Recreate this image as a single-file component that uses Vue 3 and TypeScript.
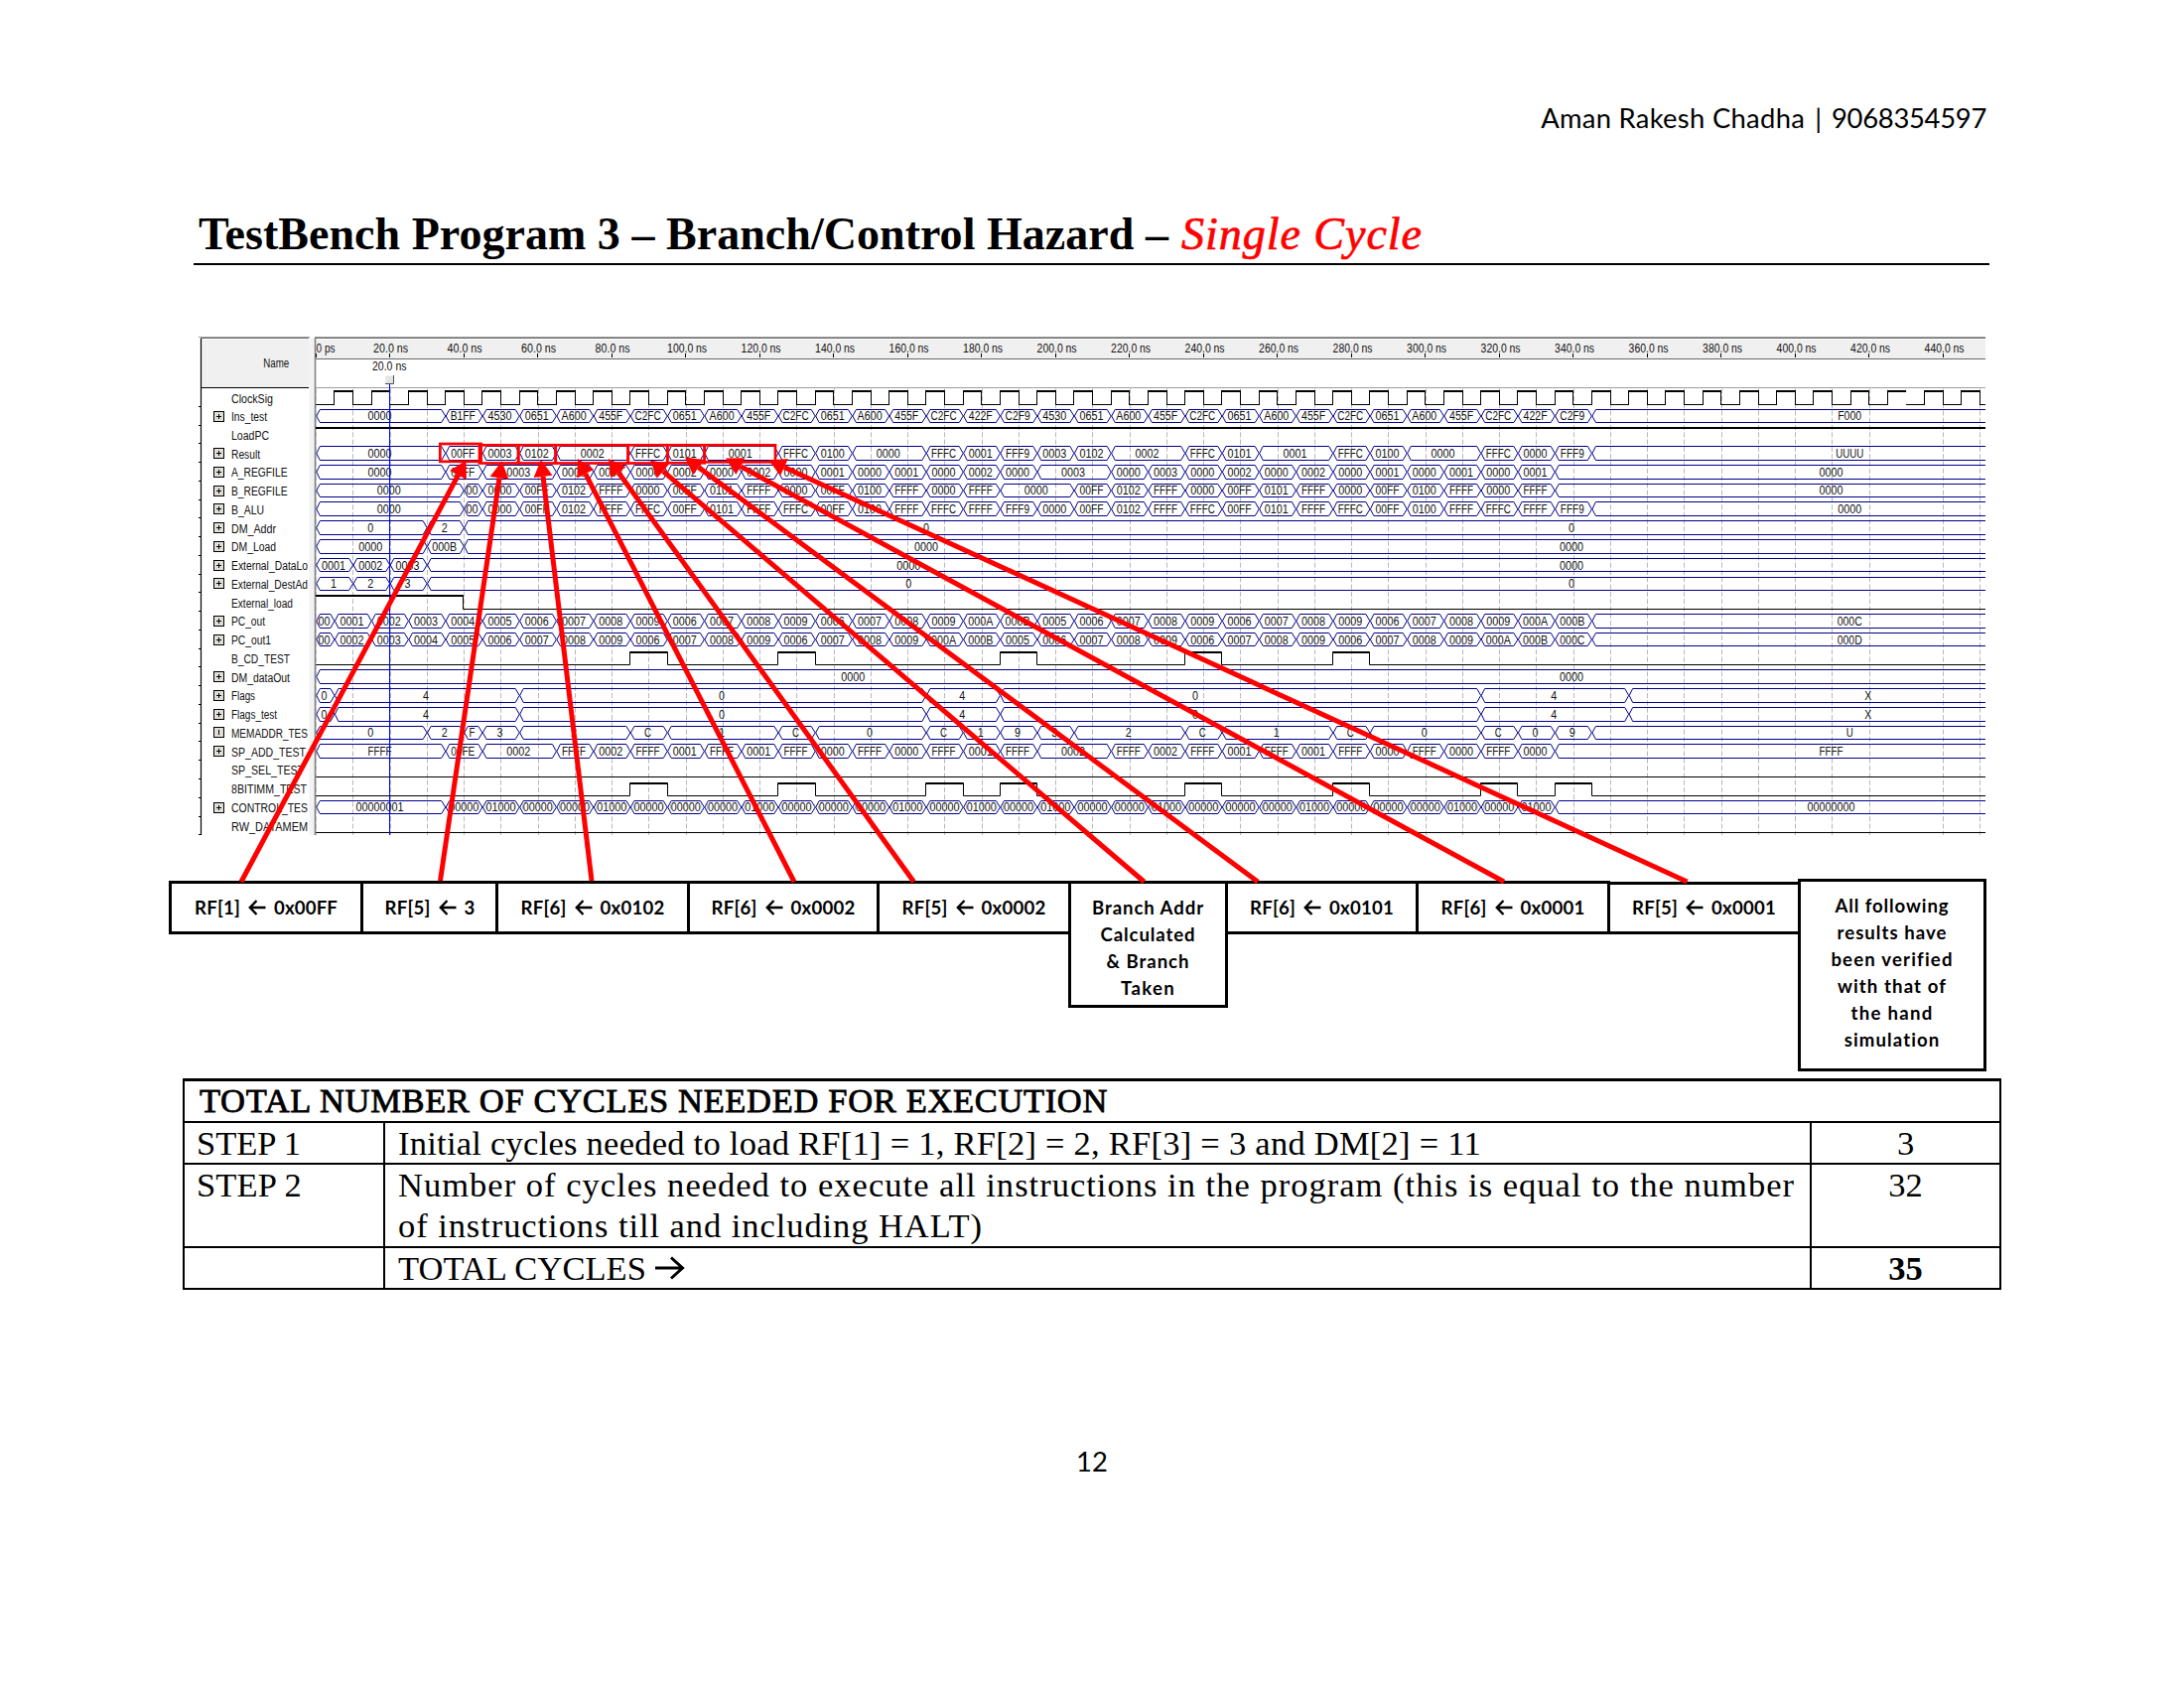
<script setup lang="ts">
import type { Directive } from 'vue'

// Tracks a line of text in or out so that it sets to the given measure.
const vFit: Directive<HTMLElement, number> = {
  mounted(el, { value }) {
    const natural = el.getBoundingClientRect().width
    const count = (el.textContent ?? '').trim().length
    if (count > 0) el.style.letterSpacing = `${(value - natural) / count}px`
  },
}

interface Cell { from: number; to: number; text: string; at: number[] }
interface Signal {
  name: string
  width: number
  y: number
  bus: boolean
  cells: Cell[]
  path: string
  clipped: boolean
}

const X0 = 318.3
const SCALE = 3.725
const END = 2000
const LAST = 485
const snap = (v: number): number => Math.floor(v) + 0.5
const px = (t: number): number => Math.round((X0 + t * SCALE) * 10) / 10
const rowY = (i: number): number => 419 + 18.76 * (i - 1)

// Values are "start:text"; optional "@t1,t2" gives label times.
function parse(spec: string): Cell[] {
  const items = spec.trim().split(/\s+/).map((s) => {
    const [body, at] = s.split('@')
    const [start, text] = body.split(':')
    return { from: Number(start), text, at: at ? at.split(',').map(Number) : [] }
  })
  return items.map((c, i) => {
    const to = i + 1 < items.length ? items[i + 1].from : LAST
    return { ...c, to, at: c.at.length ? c.at : [(c.from + to) / 2] }
  })
}

// Consecutive values, 10 ns apart, following an initial prefix.
function run(prefix: string, start: number, values: string): string {
  const out: string[] = []
  values.trim().split(/\s+/).forEach((v, i) => {
    if (v !== '-') out.push(`${start + i * 10}:${v}`)
  })
  return `${prefix} ${out.join(' ')}`
}

const charWidth = (c: string): number => ('ABCDUX'.includes(c) ? 7 : 6)
const textWidth = (s: string): number => [...s].reduce((w, c) => w + charWidth(c), 0)

function busPath(cells: Cell[], y: number): string {
  return cells.map((c) => {
    const a = px(c.from)
    const b = px(c.to)
    const t = snap(y - 6.8)
    const m = snap(y + 6.8)
    if (b > END) return `M${END} ${t}H${a + 4}L${a + 0.5} ${y}L${a + 4} ${m}H${END}`
    return `M${a + 4} ${t}H${b - 4}L${b} ${y}L${b - 4} ${m}H${a + 4}L${a + 0.5} ${y}Z`
  }).join('')
}

function levelPath(highs: number[][], y: number): string {
  const lo = snap(y + 6.8)
  const hi = snap(y - 6.2)
  let d = `M${X0} ${lo}`
  for (const [a, b] of highs) {
    d += `H${snap(px(a))}V${hi}H${snap(px(b))}V${lo}`
    d += `M${snap(px(a))} ${hi + 1}H${snap(px(b))}M${snap(px(b))} ${lo}`
  }
  return `${d}H${END}`
}

const raw: { name: string; width: number; spec?: string; highs?: number[][]; clipped?: boolean }[] = [
  { name: 'ClockSig', width: 42 },
  { name: 'Ins_test', width: 36, spec: run('0:0000', 35, 'B1FF 4530 0651 A600 455F C2FC 0651 A600 455F C2FC 0651 A600 455F C2FC 422F C2F9 4530 0651 A600 455F C2FC 0651 A600 455F C2FC 0651 A600 455F C2FC 422F C2F9 F000') },
  { name: 'LoadPC', width: 38 },
  { name: 'Result', width: 29, spec: run('0:0000', 35, '00FF 0003 0102 0002 - FFFC 0101 0001 - FFFC 0100 0000 - FFFC 0001 FFF9 0003 0102 0002 - FFFC 0101 0001 - FFFC 0100 0000 - FFFC 0000 FFF9 UUUU') },
  { name: 'A_REGFILE', width: 56.5, spec: run('0:0000', 35, '00FF 0003 - 0000 0003 0000 0002 0000 0002 0000 0001 0000 0001 0000 0002 0000 0003 - 0000 0003 0000 0002 0000 0002 0000 0001 0000 0001 0000 0001 0000') },
  { name: 'B_REGFILE', width: 56.5, spec: run('0:0000 40:00', 45, '0000 00FF 0102 FFFF 0000 00FF 0101 FFFF 0000 00FF 0100 FFFF 0000 FFFF 0000 - 00FF 0102 FFFF 0000 00FF 0101 FFFF 0000 00FF 0100 FFFF 0000 FFFF 0000') },
  { name: 'B_ALU', width: 33, spec: run('0:0000 40:00', 45, '0000 00FF 0102 FFFF FFFC 00FF 0101 FFFF FFFC 00FF 0100 FFFF FFFC FFFF FFF9 0000 00FF 0102 FFFF FFFC 00FF 0101 FFFF FFFC 00FF 0100 FFFF FFFC FFFF FFF9 0000') },
  { name: 'DM_Addr', width: 45, spec: '0:0 30:2 40:0@165.3,339.8' },
  { name: 'DM_Load', width: 45, spec: '0:0000 30:000B 40:0000@165.3,339.8' },
  { name: 'External_DataLo', width: 77, spec: '0:0001 10:0002 20:0003 30:0000@160.5,339.8' },
  { name: 'External_DestAd', width: 77, spec: '0:1 10:2 20:3 30:0@160.5,339.8' },
  { name: 'External_load', width: 62 },
  { name: 'PC_out', width: 34, spec: run('0:00', 5, '0001 0002 0003 0004 0005 0006 0007 0008 0009 0006 0007 0008 0009 0006 0007 0008 0009 000A 000B 0005 0006 0007 0008 0009 0006 0007 0008 0009 0006 0007 0008 0009 000A 000B 000C') },
  { name: 'PC_out1', width: 40, spec: run('0:00', 5, '0002 0003 0004 0005 0006 0007 0008 0009 0006 0007 0008 0009 0006 0007 0008 0009 000A 000B 0005 0006 0007 0008 0009 0006 0007 0008 0009 0006 0007 0008 0009 000A 000B 000C 000D') },
  { name: 'B_CD_TEST', width: 59, highs: [[85, 95], [125, 135], [185, 195], [235, 245], [275, 285]] },
  { name: 'DM_dataOut', width: 59, spec: '0:0000@145.5,339.8' },
  { name: 'Flags', width: 24, spec: '0:0 5:4 55:0 165:4 185:0@238 315:4 355:X' },
  { name: 'Flags_test', width: 46, spec: '0:0 5:4 55:0 165:4 185:0@238 315:4 355:X' },
  { name: 'MEMADDR_TES', width: 77, spec: '0:0 30:2 40:F 45:3 55:2 85:C 95:1 125:C 135:0 165:C 175:1 185:9 195:3 205:2 235:C 245:1 275:C 285:0 315:C 325:0 335:9 345:U' },
  { name: 'SP_ADD_TEST', width: 75, spec: run('0:FFFF', 35, '00FE 0002 - FFFF 0002 FFFF 0001 FFFF 0001 FFFF 0000 FFFF 0000 FFFF 0001 FFFF 0002 - FFFF 0002 FFFF 0001 FFFF 0001 FFFF 0000 FFFF 0000 FFFF 0000 FFFF') },
  { name: 'SP_SEL_TEST', width: 73, highs: [] },
  { name: '8BITIMM_TEST', width: 76, highs: [[85, 95], [125, 135], [165, 175], [185, 195], [235, 245], [275, 285], [315, 325], [335, 345]] },
  { name: 'CONTROL_TES', width: 77, clipped: true, spec: run('0:00000001', 35, '0000000 0010000 0000000 0000000 0010000 0000000 0000000 0000000 0010000 0000000 0000000 0000000 0010000 0000000 0010000 0000000 0010000 0000000 0000000 0010000 0000000 0000000 0000000 0010000 0000000 0000000 0000000 0010000 0000000 0010000 00000000') },
  { name: 'RW_DATAMEM', width: 77, highs: [] },
]

const signals: Signal[] = raw.map((r, i) => {
  const y = Math.round(rowY(i) * 10) / 10
  const cells = r.spec ? parse(r.spec) : []
  return {
    name: r.name,
    width: r.width,
    y,
    bus: cells.length > 0,
    cells,
    clipped: !!r.clipped,
    path: cells.length ? busPath(cells, y) : r.highs ? levelPath(r.highs, y) : '',
  }
})

const clockLow: string[] = []
const clockHigh: string[] = []
const clockEdge: string[] = []
for (let t = 0; t <= 450; t += 10) {
  clockLow.push(`M${px(t)} 407.5H${Math.min(px(t + 5), END)}`)
  if (t + 5 < 451) {
    clockHigh.push(`M${px(t + 5)} 394H${Math.min(px(t + 10), END)}`)
    clockEdge.push(`M${snap(px(t + 5))} 393V408`)
    if (t + 10 !== 430 && t < 450) clockEdge.push(`M${snap(px(t + 10))} 393V408`)
  }
}

const gridTimes = Array.from({ length: 46 }, (_, i) => i * 10).filter((t) => t !== 430)
const ticks = Array.from({ length: 23 }, (_, i) => {
  const t = i * 20
  return {
    x: snap(px(t)),
    label: t === 0 ? '0 ps' : `${t}.0 ns`,
    width: t === 0 ? 19 : t < 100 ? 35 : 40,
    start: t === 0 ? 318.5 : px(t) - (t < 100 ? 16.7 : 18.7),
  }
})

const marks = [
  { x: 443.3, y: 447, w: 41.3, h: 17.8 },
  { x: 483, y: 448.3, w: 39, h: 18.2 },
  { x: 522.3, y: 448.3, w: 37.4, h: 18.2 },
  { x: 559.7, y: 448.3, w: 73, h: 18.2 },
  { x: 632.7, y: 448.3, w: 39.6, h: 18.2 },
  { x: 672.3, y: 448.3, w: 37.4, h: 18 },
  { x: 709.7, y: 448.3, w: 71.3, h: 17 },
]

const arrows = [
  [243, 888, 469.5, 463.5],
  [443.5, 887, 505.5, 464.5],
  [596, 887, 545, 463],
  [800, 888, 582, 462],
  [920.5, 888, 613, 462],
  [1152.5, 888, 655, 463.5],
  [1267, 888, 690, 460.5],
  [1515, 888, 731, 461.5],
  [1699.5, 888, 774.5, 463.5],
].map(([x1, y1, x2, y2]) => {
  const len = Math.hypot(x2 - x1, y2 - y1)
  const ux = (x2 - x1) / len
  const uy = (y2 - y1) / len
  const bx = x2 - ux * 17
  const by = y2 - uy * 17
  return {
    x1, y1, x2: bx, y2: by,
    head: `${x2},${y2} ${bx - uy * 9.5},${by + ux * 9.5} ${bx + uy * 9.5},${by - ux * 9.5}`,
  }
})

interface Callout { kind: string; width: number; reg?: string; value?: string; valueWidth?: number; lines?: { text: string; width: number }[] }
const callouts: Callout[] = [
  { kind: 'reg', width: 196, reg: 'RF[1]', value: '0x00FF', valueWidth: 64 },
  { kind: 'reg', width: 139, reg: 'RF[5]', value: '3', valueWidth: 10 },
  { kind: 'reg', width: 196, reg: 'RF[6]', value: '0x0102', valueWidth: 65 },
  { kind: 'reg', width: 194, reg: 'RF[6]', value: '0x0002', valueWidth: 65 },
  { kind: 'reg', width: 196, reg: 'RF[5]', value: '0x0002', valueWidth: 65 },
  { kind: 'branch', width: 161, lines: [
    { text: 'Branch Addr', width: 113 }, { text: 'Calculated', width: 96 },
    { text: '& Branch', width: 84 }, { text: 'Taken', width: 55 },
  ] },
  { kind: 'reg', width: 195, reg: 'RF[6]', value: '0x0101', valueWidth: 65 },
  { kind: 'reg', width: 196, reg: 'RF[6]', value: '0x0001', valueWidth: 65 },
  { kind: 'reg', width: 195, reg: 'RF[5]', value: '0x0001', valueWidth: 65 },
  { kind: 'note', width: 190, lines: [
    { text: 'All following', width: 115 }, { text: 'results have', width: 111 },
    { text: 'been verified', width: 123 }, { text: 'with that of', width: 110 },
    { text: 'the hand', width: 83 }, { text: 'simulation', width: 97 },
  ] },
]
</script>

<template>
  <main class="page">
    <header class="running-head">
      <span v-fit="266" class="line">Aman Rakesh Chadha</span>
      <span class="line">|</span>
      <span v-fit="156" class="line">9068354597</span>
    </header>
    <h1 class="title">
      <span v-fit="977" class="line">TestBench Program 3 – Branch/Control Hazard –</span>
      <em v-fit="243" class="line accent">Single Cycle</em>
    </h1>

    <svg class="wave" viewBox="160 330 1850 555" width="1850" height="555">
      <rect x="203" y="342" width="108.500" height="48" fill="#f0f0f0" />
      <rect x="311.500" y="340" width="5" height="501" fill="#f3f3f3" />
      <rect x="318" y="342" width="1682" height="19" fill="#f0f0f0" />
      <path d="M200 339.500H312M317 339.500H2000" stroke="#a0a0a0" />
      <path d="M202 340.500H311M317 340.500H2000" stroke="#696969" />
      <path d="M317.500 341V841" stroke="#808080" stroke-width="1.600" />
      <path d="M318 361.500H2000" stroke="#696969" />
      <path d="M318 390.500H2000" stroke="#a0a0a0" />
      <path d="M202 390.500H311" stroke="#000" />
      <path d="M202.500 341V841" stroke="#000" stroke-width="1.200" />
      <path v-for="(s, i) in signals" :key="'d' + i" :d="`M200 ${snap(s.y + 9)}H202`" stroke="#000" />
      <text class="wt" x="265.300" y="370" textLength="26" lengthAdjust="spacingAndGlyphs">Name</text>

      <g v-for="(s, i) in signals" :key="s.name">
        <template v-if="s.bus">
          <rect x="215.500" :y="snap(s.y) - 5" width="10" height="10" fill="#e0ded8" stroke="#000" />
          <path v-if="s.name !== 'MEMADDR_TES'" :d="`M218 ${snap(s.y)}H223`" stroke="#000" />
          <path :d="`M220.500 ${snap(s.y) - 2.5}V${snap(s.y) + 2.5}`" stroke="#000" />
        </template>
        <text class="wt" x="233" :y="s.y + (i ? 5 : 5.8)" :textLength="s.width" lengthAdjust="spacingAndGlyphs">{{ s.name }}</text>
      </g>

      <g v-for="t in ticks" :key="t.label">
        <path :d="`M${t.x} 356V360`" stroke="#000" />
        <text class="wt" :x="t.start" y="355.200" :textLength="t.width" lengthAdjust="spacingAndGlyphs">{{ t.label }}</text>
      </g>
      <text class="wt" x="375" y="373.200" textLength="34.500" lengthAdjust="spacingAndGlyphs">20.0 ns</text>

      <path v-for="t in gridTimes" :key="'g' + t" :d="`M${snap(px(t) + 0.2)} 391.500V841`" stroke="#b8b8b8" stroke-dasharray="5 2.300" />

      <path :d="clockLow.join('')" stroke="#000" />
      <path :d="clockHigh.join('')" stroke="#000" stroke-width="2" />
      <path :d="clockEdge.join('')" stroke="#000" />
      <path d="M318 431H2000" stroke="#000" stroke-width="2" />
      <path d="M318 600H466.800" stroke="#000" stroke-width="2" />
      <path d="M466.500 599.500V613.500H2000" stroke="#000" fill="none" />

      <g v-for="s in signals" :key="'w' + s.name">
        <path v-if="s.path" :d="s.path" :stroke="s.bus ? '#00008b' : '#000'" fill="none" />
        <template v-for="c in s.cells" :key="c.from">
          <svg v-if="s.clipped && c.text.length === 7" :x="px(c.from) + 3" :y="s.y - 7" width="31" height="14">
            <text class="wt" x="-5.500" y="11.400" textLength="42" lengthAdjust="spacingAndGlyphs">{{ c.text }}</text>
          </svg>
          <template v-else>
            <text
              v-for="at in c.at" :key="at" class="wt" :x="px(at) - 1 - textWidth(c.text) / 2" :y="s.y + 4.4"
              :textLength="textWidth(c.text)" lengthAdjust="spacingAndGlyphs"
            >{{ c.text }}</text>
          </template>
        </template>
      </g>

      <path d="M392.500 387V841" stroke="#0000ff" />
      <rect x="388.500" y="378.500" width="8" height="8" fill="#e4e4e4" />
      <path d="M388 386.500H396.500V378" stroke="#505050" fill="none" />

      <rect v-for="(m, i) in marks" :key="'m' + i" :x="m.x" :y="m.y" :width="m.w" :height="m.h" fill="none" stroke="#f00" stroke-width="2.700" />
      <g v-for="(a, i) in arrows" :key="'a' + i">
        <line :x1="a.x1" :y1="a.y1" :x2="a.x2" :y2="a.y2" stroke="#f00" stroke-width="5" />
        <polygon :points="a.head" fill="#f00" />
      </g>
    </svg>

    <section class="callouts">
      <div v-for="(c, i) in callouts" :key="i" class="callout" :class="[c.kind, { lower: i === 8 }]" :style="{ width: c.width + 'px' }">
        <template v-if="c.kind === 'reg'">
          <span v-fit="46" class="line">{{ c.reg }}</span>
          <svg class="larr" viewBox="0 0 18 16" width="18" height="16"><path d="M17.500 8H2M8.500 1L1.800 8L8.500 15" /></svg>
          <span v-fit="c.valueWidth!" class="line">{{ c.value }}</span>
        </template>
        <template v-else>
          <span v-for="l in c.lines" :key="l.text" v-fit="l.width" class="line">{{ l.text }}</span>
        </template>
      </div>
    </section>

    <table class="cycles">
      <colgroup><col class="c-step"><col class="c-text"><col class="c-num"></colgroup>
      <tbody>
        <tr class="r0"><th colspan="3"><span v-fit="915" class="line">TOTAL NUMBER OF CYCLES NEEDED FOR EXECUTION</span></th></tr>
        <tr class="r1">
          <td><span v-fit="105" class="line">STEP 1</span></td>
          <td><span v-fit="1091" class="line">Initial cycles needed to load RF[1] = 1, RF[2] = 2, RF[3] = 3 and DM[2] = 11</span></td>
          <td class="num">3</td>
        </tr>
        <tr class="r2">
          <td><span v-fit="106" class="line">STEP 2</span></td>
          <td>
            <span v-fit="1407" class="line">Number of cycles needed to execute all instructions in the program (this is equal to the number</span><br>
            <span v-fit="589" class="line">of instructions till and including HALT)</span>
          </td>
          <td class="num">32</td>
        </tr>
        <tr class="r3">
          <td></td>
          <td>
            <span v-fit="250" class="line">TOTAL CYCLES</span>
            <svg class="rarr" viewBox="0 0 30 24" width="30" height="24"><path d="M0 12H27M16 1.500L27.500 12L16 22.500" /></svg>
          </td>
          <td class="num strong">35</td>
        </tr>
      </tbody>
    </table>

    <footer class="folio">12</footer>
  </main>
</template>

<style>
body { margin: 0; background: #fff; }
</style>

<style scoped>
.page {
  box-sizing: border-box;
  width: 2200px;
  height: 1700px;
  padding-top: 99px;
  overflow: hidden;
  background: #fff;
  color: #000;
}
.line { display: inline-block; white-space: nowrap; }
.running-head {
  display: flex;
  justify-content: flex-end;
  gap: 10px;
  height: 40px;
  margin-right: 199px;
  font: 27.4px/40px Lato, sans-serif;
}
.title {
  display: flex;
  gap: 13px;
  box-sizing: border-box;
  width: 1809px;
  height: 56px;
  margin: 72px 0 0 195px;
  padding-left: 5px;
  border-bottom: 2px solid #000;
  font: bold 46px/50px "Liberation Serif", serif;
}
.accent { color: #f00; font-style: italic; font-weight: normal; -webkit-text-stroke: 0.7px #f00; }
.wave {
  display: block;
  position: relative;
  z-index: 1;
  margin: 63px 0 0 160px;
  overflow: visible;
}
.wt { font: 12px "Liberation Sans", sans-serif; fill: #111; }
.callouts {
  display: flex;
  align-items: flex-start;
  height: 194px;
  margin-left: 170px;
}
.callout {
  box-sizing: border-box;
  flex: none;
  display: flex;
  margin-top: 2px;
  margin-right: -3px;
  padding-top: 11px;
  border: 3px solid #000;
  font: bold 18.6px/27px Lato, sans-serif;
}
.reg { height: 54px; justify-content: center; gap: 8px; }
.lower { margin-top: 3px; height: 53px; padding-top: 10px; }
.branch { height: 128px; flex-direction: column; align-items: center; }
.note { height: 194px; margin-top: 0; flex-direction: column; align-items: center; }
.larr { flex: none; margin-top: 5px; }
.larr path { fill: none; stroke: #000; stroke-width: 2.4; }
.cycles {
  table-layout: fixed;
  width: 1830px;
  margin: 7px 0 0 184px;
  border-collapse: collapse;
  font: 34.5px/40px "Liberation Serif", serif;
}
.c-step { width: 202px; }
.c-text { width: 1437px; }
.c-num { width: 191px; }
.cycles td, .cycles th {
  box-sizing: border-box;
  padding: 0 0 0 13px;
  border: 2px solid #000;
  text-align: left;
  vertical-align: top;
  font-weight: normal;
}
.cycles td:first-child { padding-left: 12px; }
.cycles th { padding-left: 15px; border-top-width: 3px; line-height: 38px; -webkit-text-stroke: 0.8px #000; }
.cycles .line { vertical-align: top; }
.r0, .r1, .r3 { height: 42px; }
.r2 { height: 84px; line-height: 41px; }
.cycles .num { padding: 0; text-align: center; }
.cycles .strong { font-weight: bold; }
.rarr { margin: 8px 0 0 9px; vertical-align: top; }
.rarr path { fill: none; stroke: #000; stroke-width: 3; }
.folio {
  margin-top: 153px;
  text-align: center;
  font: 27.4px/40px Lato, sans-serif;
}
</style>
